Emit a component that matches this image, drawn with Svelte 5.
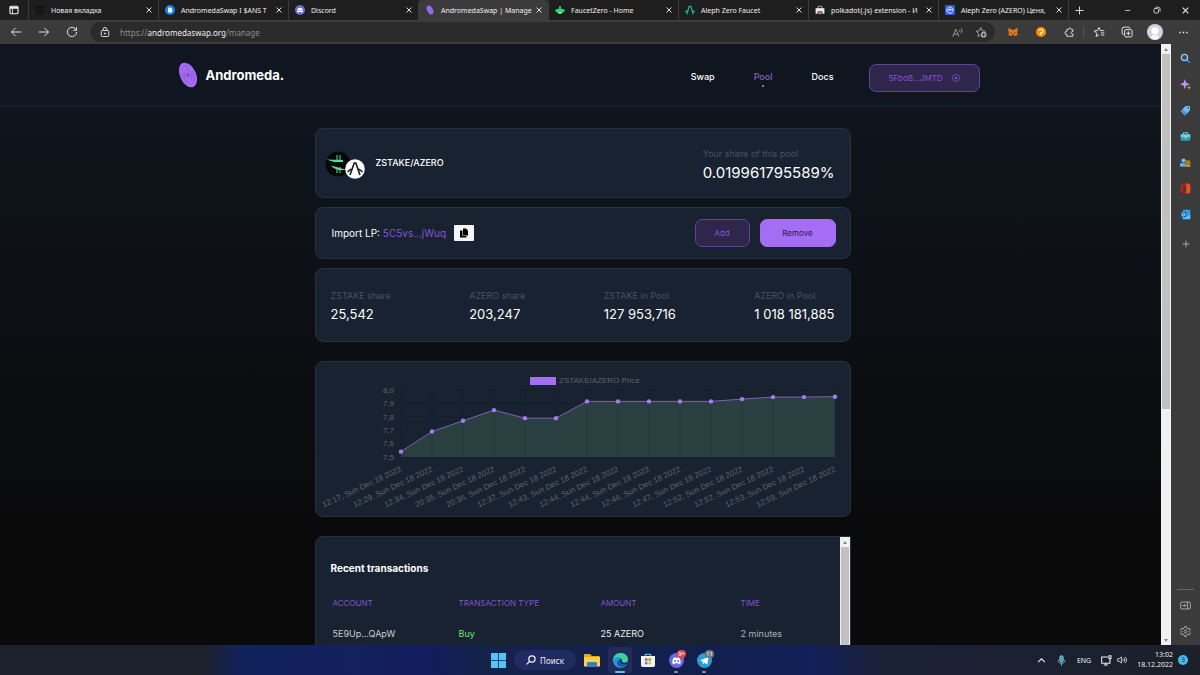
<script>
	let url = 'andromedaswap.org'
	let tabs = [
		{ icon: 'blank', title: 'Новая вкладка' },
		{ icon: 'doc', title: 'AndromedaSwap I $ANS T' },
		{ icon: 'discord', title: 'Discord' },
		{ icon: 'andromeda', title: 'AndromedaSwap | Manage', active: true },
		{ icon: 'faucet', title: 'FaucetZero - Home' },
		{ icon: 'aleph', title: 'Aleph Zero Faucet' },
		{ icon: 'store', title: 'polkadot{.js} extension - И' },
		{ icon: 'cmc', title: 'Aleph Zero (AZERO) Цена,' }
	]
	let sidebar = ['search', 'sparkle', 'tag', 'toolbox', 'games', 'office', 'outlook', 'plus']
	let stats = [
		{ label: 'ZSTAKE share', value: '25,542' },
		{ label: 'AZERO share', value: '203,247' },
		{ label: 'ZSTAKE in Pool', value: '127 953,716' },
		{ label: 'AZERO in Pool', value: '1 018 181,885' }
	]
	let transactions = [
		{ account: '5E9Up...QApW', type: 'Buy', amount: '25 AZERO', time: '2 minutes' }
	]
	let prices = [
		['12:17', 7.54], ['12:29', 7.69], ['12:34', 7.77], ['20:35', 7.85], ['20:36', 7.79],
		['12:37', 7.79], ['12:43', 7.915], ['12:44', 7.915], ['12:44', 7.915], ['12:46', 7.915],
		['12:47', 7.915], ['12:52', 7.932], ['12:52', 7.947], ['12:53', 7.947], ['12:59', 7.95]
	]
	let ticks = ['8,0', '7,9', '7,8', '7,7', '7,6', '7,5']

	// plot area inside the 534x154 chart
	const left = 85
	const top = 28
	const bottom = 95
	const step = 31
	const px = (i) => left + i * step
	const py = (v) => bottom - ((v - 7.5) / 0.5) * (bottom - top)
	let line = prices.map(([, v], i) => px(i) + ',' + py(v)).join(' ')
	let area = px(0) + ',' + bottom + ' ' + line + ' ' + px(prices.length - 1) + ',' + bottom
</script>

{#snippet icon(name, size)}
	<svg width={size} height={size} viewBox="0 0 16 16" fill="none" stroke="currentColor" stroke-width="1.2" aria-hidden="true">
		{#if name === 'blank'}
			<rect x="1" y="1" width="14" height="14" rx="2" fill="#161616" stroke="#1b1b1b" />
		{:else if name === 'doc'}
			<circle cx="8" cy="8" r="8" fill="#1283ea" stroke="none" />
			<path d="M5 4h4l2.500 2v6H5z" fill="#fff" stroke="none" />
		{:else if name === 'discord'}
			<circle cx="8" cy="8" r="8" fill="#6a68de" stroke="none" />
			<path d="M3.500 11c0-3 .6-5 1.500-6l2-.6.4.8h1.200l.4-.8 2 .6c.9 1 1.500 3 1.500 6l-2 1.200-.8-1.200H6.300l-.8 1.200z" fill="#fff" stroke="none" />
			<circle cx="6.300" cy="8.500" r="1" fill="#6a68de" stroke="none" />
			<circle cx="9.700" cy="8.500" r="1" fill="#6a68de" stroke="none" />
		{:else if name === 'andromeda'}
			<ellipse cx="8" cy="8" rx="4.600" ry="7.600" fill="#9a68ee" stroke="none" transform="rotate(-28 8 8)" />
		{:else if name === 'faucet'}
			<path d="M6.500 2h3v4q6 0 6 3t-6 3h-3q-6 0-6-3t6-3z" fill="#2fd66f" stroke="none" />
			<path d="M5 11h6v3H5z" fill="#7af0a4" stroke="none" />
		{:else if name === 'aleph'}
			<path d="M3 15L6.500 2h3L13 15M0 11l4-1.500M16 11l-4-1.500" stroke="#14b896" stroke-width="2" />
		{:else if name === 'store'}
			<path d="M1 5h14v9H1z" fill="#eee" stroke="none" />
			<path d="M5 5V2h6v3" stroke="#ccc" />
			<path d="M3 14a5 5 0 0110 0z" fill="#dd4b3e" stroke="none" />
			<path d="M8 14h5a5 5 0 00-3-4.500z" fill="#36a853" stroke="none" />
			<circle cx="8" cy="13" r="2" fill="#4285f4" stroke="none" />
		{:else if name === 'cmc'}
			<rect width="16" height="16" rx="2" fill="#2c5cf2" stroke="none" />
			<path d="M12.500 10.500a5 5 0 11.500-3c0 2.500-2 2.500-2 0L9.500 6 8 9 6.500 6 5 9" stroke="#fff" stroke-width="1.400" />
		{:else if name === 'close'}
			<path d="M3 3l10 10M13 3L3 13" stroke-width="1.800" />
		{:else if name === 'plus'}
			<path d="M8 1v14M1 8h14" stroke-width="1.600" />
		{:else if name === 'minus'}
			<path d="M2 8h12" stroke-width="1.600" />
		{:else if name === 'restore'}
			<rect x="2" y="5" width="9" height="9" rx="2" stroke-width="1.600" />
			<path d="M5 2.500h6a3 3 0 013 3V11" stroke-width="1.600" />
		{:else if name === 'tabmenu'}
			<rect x="1.500" y="2" width="13" height="12" rx="2" stroke-width="1.800" />
			<path d="M1.500 4.500h13" stroke-width="3" />
			<path d="M5.500 6v8" stroke-width="1.400" />
		{:else if name === 'back'}
			<path d="M15 8H2M7.500 2.500L2 8l5.500 5.500" />
		{:else if name === 'forward'}
			<path d="M1 8h13M8.500 2.500L14 8l-5.500 5.500" />
		{:else if name === 'refresh'}
			<path d="M13.700 5.500A6.200 6.200 0 1014.200 8M14 1.500v4.200H9.800" />
		{:else if name === 'lock'}
			<rect x="3" y="6" width="10" height="8" rx="1.500" />
			<path d="M5.500 6V4.500a2.500 2.500 0 015 0V6" />
			<circle cx="8" cy="10" r=".8" fill="currentColor" />
		{:else if name === 'read'}
			<path d="M1 14L5.500 3 10 14M2.600 10.500h5.800M10.500 4c1 1 1 2.500 0 3.500M13 2c2 2 2 5 0 7" />
		{:else if name === 'favadd'}
			<path d="M7 12.500L4 14l.7-4L1.500 7l4.200-.6L7.700 2l2 4.400L14 7" />
			<circle cx="11.500" cy="11.500" r="3.800" fill="#aaa" stroke="none" />
			<path d="M11.500 9.500v4M9.500 11.500h4" stroke="#2b2b2b" />
		{:else if name === 'fox'}
			<path d="M1 1l5 3.500h4L15 1l.5 5-1 3 1 3.500-3.500 2-2.500-.5h-3L4 14.500.5 12.500l1-3.500-1-3z" fill="#e4761b" stroke="none" />
			<path d="M3.500 8.500l3 1.500-1 1zM12.500 8.500l-3 1.500 1 1z" fill="#3a2418" stroke="none" />
			<path d="M6.500 12.500h3l-.5 2H7z" fill="#3a2418" stroke="none" />
		{:else if name === 'polka'}
			<circle cx="8" cy="8" r="8" fill="#ff8c00" stroke="none" />
			<path d="M5 6.500a3 3 0 113 3.200H6.500M7 9.600v3.200" stroke="#fff" stroke-width="1.800" />
		{:else if name === 'puzzle'}
			<path d="M4 3.500h2.500a2 2 0 014 0H13v3.300a1.800 1.800 0 100 3.200v3.500H4V10.500a2 2 0 110-3.800z" />
		{:else if name === 'favorites'}
			<path d="M8 11.500L4.200 14l1-4.300L1.500 6.600l4.400-.4L8 2l1.700 4.200H15M10.500 9.200H15M10.500 12H15" />
		{:else if name === 'collections'}
			<path d="M3.500 11.500a2 2 0 01-2-2V4a2.500 2.500 0 012.500-2.500h6a2 2 0 012 2" />
			<rect x="4.800" y="4.800" width="10" height="9.800" rx="2" />
			<path d="M9.800 7v5.500M7 9.700h5.600" />
		{:else if name === 'avatar'}
			<circle cx="8" cy="8" r="8" fill="#cfd3e4" stroke="none" />
			<circle cx="8" cy="6.800" r="3.600" fill="#fff" stroke="none" />
			<path d="M4 14.500c0-5.500 8-5.500 8 0-2 1.500-6 1.500-8 0z" fill="#f4f4f8" stroke="none" />
		{:else if name === 'dots'}
			<path d="M2 8h2M7 8h2M12 8h2" stroke-width="2" />
		{:else if name === 'search'}
			<path d="M9.500 9.500l5 5" stroke="#2f83d0" stroke-width="2.600" />
			<circle cx="6.500" cy="6.500" r="4.500" stroke="#9cc4ee" stroke-width="2" fill="#2c4c66" />
		{:else if name === 'sparkle'}
			<path d="M7 0l1.800 5.500L14.500 7.500 8.800 9.500 7 15 5.200 9.500 0 7.500l5.200-2z" fill="#bd96fa" stroke="none" />
			<path d="M13 9.500l.9 2.100L16 12.500l-2.100.9L13 15.500l-.9-2.100-2.100-.9 2.100-.9z" fill="#d8a320" stroke="none" />
		{:else if name === 'tag'}
			<path d="M8 1.500h6.500V8L7 15.200 1 9z" fill="#70b7f2" stroke="none" />
			<path d="M1 9l6 6.200 3-3L4 6z" fill="#4a93d8" stroke="none" />
			<circle cx="12" cy="4" r="1.200" fill="#24516f" stroke="none" />
		{:else if name === 'toolbox'}
			<path d="M5 5V2.500h6V5" stroke="#74c7d8" stroke-width="1.600" />
			<rect x="1" y="4.500" width="14" height="9.500" rx="1" fill="#2b9bb5" stroke="none" />
			<path d="M1 5h14v4H1z" fill="#6fd0dd" stroke="none" />
			<path d="M7 8h2v3H7z" fill="#f2d15c" stroke="none" />
		{:else if name === 'games'}
			<circle cx="5" cy="5" r="3" fill="#76b9ee" stroke="none" />
			<path d="M0 14V9h8v5z" fill="#6aaee6" stroke="none" />
			<circle cx="11.500" cy="8.500" r="4" fill="#a47c20" stroke="none" />
			<path d="M8 12h7v2H8z" fill="#e7bb4a" stroke="none" />
		{:else if name === 'office'}
			<path d="M9 0l6 2v12l-6 2z" fill="#f0501f" stroke="none" />
			<path d="M9 0L1 3.500v9L4.500 11V5L9 4zM1 12.500L9 16v-3z" fill="#c3201d" stroke="none" />
		{:else if name === 'outlook'}
			<rect x="4" y="1" width="11" height="13" rx="1" fill="#2f9ce8" stroke="none" />
			<path d="M4 8l6 3 5-3v7H4z" fill="#59c6f5" stroke="none" />
			<rect x="1" y="4" width="8" height="8" rx="1" fill="#0e64b6" stroke="none" />
			<circle cx="5" cy="8" r="2" stroke="#fff" />
		{:else if name === 'panel'}
			<rect x="1" y="3" width="14" height="10" rx="1.500" />
			<path d="M11 3v10M3.500 8h5M6.500 6l2 2-2 2" />
		{:else if name === 'gear'}
			<path d="M6.500 1h3l.5 2.200 1.600.9 2.100-.7 1.500 2.600L13.600 7.500v1l1.600 1.500-1.500 2.600-2.100-.7-1.600.9-.5 2.200h-3L6 12.800l-1.600-.9-2.100.7L.8 10l1.600-1.500v-1L.8 6l1.500-2.600 2.100.7L6 3.200z" />
			<circle cx="8" cy="8" r="2.200" />
		{:else if name === 'windows'}
			<path d="M0 0h7.600v7.600H0zM8.400 0H16v7.600H8.400zM0 8.400h7.600V16H0zM8.400 8.400H16V16H8.400z" fill="#55c3f5" stroke="none" />
		{:else if name === 'folder'}
			<path d="M0 2h6l2 2h7.500v4H0z" fill="#e5a620" stroke="none" />
			<path d="M0 5h16v9.500H0z" fill="#fbcf55" stroke="none" />
			<path d="M3 14.500v-3.200q0-1.300 1.300-1.300h7.400q1.300 0 1.300 1.300v3.200z" fill="#2b80c8" stroke="none" />
		{:else if name === 'edge'}
			<circle cx="8" cy="8" r="8" fill="#1677c8" stroke="none" />
			<path d="M0 8C0-2.500 16-2.500 16 7c0 4-5.500 4-6.500 2C11 6 7 4 4 5.500 1.500 6.500.5 8 0 8z" fill="#42cfa0" stroke="none" />
			<path d="M0 8c.5-4 7-5 9-1.500C6 6 5 9 7 11.500s5.500 2 7 .8C11 17 1 17 0 8z" fill="#2499dd" stroke="none" />
			<path d="M7 7.500C4.500 10 7 14.500 13.500 12.500 10.500 16 4.500 15 4.500 10.500 4.500 9 5.500 8 7 7.500z" fill="#0c4f9e" stroke="none" />
			<path d="M7 7.500c1-.8 2.500-.6 2.700.3.1.6-.5 1-.2 1.600.9 1.500 4.500 1.200 6-.4-.2 1.200-.8 2.500-1.700 3.200C9.500 13 6 10.500 7 7.500z" fill="#192656" stroke="none" />
		{:else if name === 'msstore'}
			<path d="M5 4V1.500h6V4" stroke="#4bb0ee" stroke-width="1.500" />
			<path d="M0 3.500h16V14q0 2-2 2H2q-2 0-2-2z" fill="#f0f4fa" stroke="none" />
			<path d="M4.500 6h3v3h-3z" fill="#f05133" stroke="none" />
			<path d="M8.500 6h3v3h-3z" fill="#7fba00" stroke="none" />
			<path d="M4.500 10h3v3h-3z" fill="#1b9de2" stroke="none" />
			<path d="M8.500 10h3v3h-3z" fill="#fdb813" stroke="none" />
		{:else if name === 'telegram'}
			<circle cx="8" cy="8" r="8" fill="#269fd8" stroke="none" />
			<path d="M3 8l9.500-4-1.600 8.500-3-2-1.500 1.500L6 9z" fill="#fff" stroke="none" />
		{:else if name === 'chevron'}
			<path d="M2 11l6-6 6 6" stroke-width="1.800" />
		{:else if name === 'mic'}
			<rect x="5.500" y="1" width="5" height="9" rx="2.500" fill="#4b9cb8" stroke="#8fd0e4" />
			<path d="M3 7.500c0 6 10 6 10 0M8 12v3.500" stroke="#8fd0e4" />
		{:else if name === 'network'}
			<path d="M10 3H1v9h12V8.500M4 14.500h6M7 12v2.500" stroke-width="1.500" />
			<path d="M11.500 1h3v4h-3zM13 5v4" stroke-width="1.500" />
		{:else if name === 'volume'}
			<path d="M1 6h2.500L7 3v10l-3.500-3H1zM9 6c1 1 1 3 0 4M11 4.500c2 2 2 5 0 7M13 3c3 3 3 7 0 10" />
		{/if}
	</svg>
{/snippet}

<div class="desktop">
	<div class="tabs">
		<button class="tab-menu" aria-label="Tab actions">{@render icon('tabmenu', 10)}</button>
		{#each tabs as tab}
			<div class="tab" class:active={tab.active}>
				{@render icon(tab.icon, 10)}
				<span>{tab.title}</span>
				<button aria-label="Close tab">{@render icon('close', 8)}</button>
			</div>
		{/each}
		<button class="new-tab" aria-label="New tab">{@render icon('plus', 9)}</button>
		<div class="window-buttons">
			<button aria-label="Minimize">{@render icon('minus', 7)}</button>
			<button aria-label="Restore">{@render icon('restore', 8)}</button>
			<button aria-label="Close">{@render icon('close', 9)}</button>
		</div>
	</div>

	<div class="toolbar">
		<button aria-label="Back">{@render icon('back', 12)}</button>
		<button aria-label="Forward">{@render icon('forward', 12)}</button>
		<button aria-label="Refresh">{@render icon('refresh', 12)}</button>
		<div class="address">
			{@render icon('lock', 12)}
			<span class="url">https://<b>{url}</b>/manage</span>
			<button aria-label="Read aloud">{@render icon('read', 11)}</button>
			<button aria-label="Add to favorites">{@render icon('favadd', 12)}</button>
		</div>
		<button aria-label="MetaMask">{@render icon('fox', 10)}</button>
		<button aria-label="Polkadot">{@render icon('polka', 10)}</button>
		<button aria-label="Extensions">{@render icon('puzzle', 11)}</button>
		<i class="divider"></i>
		<button aria-label="Favorites">{@render icon('favorites', 12)}</button>
		<button aria-label="Collections">{@render icon('collections', 12)}</button>
		<button aria-label="Profile">{@render icon('avatar', 16)}</button>
		<button aria-label="Settings">{@render icon('dots', 11)}</button>
	</div>

	<div class="window">
		<div class="page">
			<header>
				<div class="header-inner">
					<a class="logo" href="/">
						<svg width="20" height="26" viewBox="0 0 20 26" aria-hidden="true">
							<g transform="rotate(-24 10 13)" fill="none" stroke="#7c4fc9">
								<ellipse cx="10" cy="13" rx="8" ry="13" fill="#a56cf4" stroke="none" />
								<ellipse cx="10" cy="13" rx="5.500" ry="9.500" stroke-dasharray="12 3" stroke-width=".6" />
								<ellipse cx="10" cy="13" rx="3.500" ry="6" stroke-dasharray="8 3" stroke-width=".6" />
								<ellipse cx="10" cy="13" rx="1" ry="1.800" fill="#7c4fc9" />
							</g>
						</svg>
						Andromeda.
					</a>
					<nav>
						<a href="/swap">Swap</a>
						<a href="/pool" class="current">Pool</a>
						<a href="/docs">Docs</a>
					</nav>
					<button class="outline account">
						5FboB...JMTD
						<svg width="8" height="8" viewBox="0 0 16 16" fill="none" stroke="currentColor" stroke-width="1.500" aria-hidden="true">
							<circle cx="8" cy="8" r="7" />
							<path d="M5.500 5.500l5 5M10.500 5.500l-5 5" stroke-width="2" />
						</svg>
					</button>
				</div>
			</header>

			<main>
				<section class="card pair">
					<svg width="40" height="28" viewBox="0 0 40 28" aria-hidden="true">
						<circle cx="13" cy="13" r="12.500" fill="#050708" />
						<path d="M1.500 8.500L18 9v2H9zM22 19L6 14.500l2.500 2.500 5 2z" fill="#4fe39a" />
						<path d="M12 4v6M15 4v6M12 16v6M15 16v6" stroke="#4fe39a" stroke-width="1" />
						<circle cx="30" cy="18" r="9.800" fill="#fff" />
						<path d="M25 24l4.200-12h1.600L35 24M22.500 21l3.500-3M37.500 21L34 18" fill="none" stroke="#14171c" stroke-width="1.600" />
					</svg>
					<h1>ZSTAKE/AZERO</h1>
					<div class="share">
						<span class="label">Your share of this pool</span>
						<span class="big">0.019961795589%</span>
					</div>
				</section>

				<section class="card lp">
					<p>Import LP: <a href="/lp">5C5vs...jWuq</a></p>
					<button class="copy" aria-label="Copy address">
						<svg width="10" height="10" viewBox="0 0 20 20" aria-hidden="true">
							<path d="M8 1h6l4 4v10H8z" fill="#000" />
							<path d="M2 5h5v11h8v3H2z" fill="#000" />
						</svg>
					</button>
					<button class="outline add">Add</button>
					<button class="remove">Remove</button>
				</section>

				<section class="card stats">
					{#each stats as stat}
						<div>
							<span class="label">{stat.label}</span>
							<span class="value">{stat.value}</span>
						</div>
					{/each}
				</section>

				<section class="card chart">
					<svg viewBox="0 0 534 154" role="img" aria-label="ZSTAKE/AZERO Price">
						<rect x="214" y="15" width="26" height="8" fill="#a56ff2" />
						<text x="243" y="21">ZSTAKE/AZERO Price</text>
						{#each ticks as tick, i}
							<text x="78" y={31 + i * 13.3} text-anchor="end">{tick}</text>
							<path class="grid" d="M{left} {top + i * 13.4}H{px(14)}" />
						{/each}
						<polygon points={area} fill="#2a4040" />
						{#each prices as [time], i}
							<path class="grid" d="M{px(i)} {top}V{bottom}" />
							<text text-anchor="end" transform="translate({px(i) + 1} 109) rotate(-25)">{time}, Sun Dec 18 2022</text>
						{/each}
						<polyline points={line} fill="none" stroke="#7c62b8" />
						{#each prices as [, value], i}
							<circle cx={px(i)} cy={py(value)} r="2.200" fill="#a37af0" />
						{/each}
					</svg>
				</section>

				<section class="card recent">
					<div class="recent-body">
						<h2>Recent transactions</h2>
						<table>
							<thead>
								<tr><th>ACCOUNT</th><th>TRANSACTION TYPE</th><th>AMOUNT</th><th>TIME</th></tr>
							</thead>
							<tbody>
								{#each transactions as tx}
									<tr>
										<td>{tx.account}</td>
										<td class="buy">{tx.type}</td>
										<td class="amount">{tx.amount}</td>
										<td class="time">{tx.time}</td>
									</tr>
								{/each}
							</tbody>
						</table>
					</div>
					<div class="scrollbar"><i class="up"></i><i class="thumb full"></i></div>
				</section>
			</main>
		</div>
		<div class="scrollbar"><i class="up"></i><i class="thumb"></i><i class="down"></i></div>
		<aside>
			{#each sidebar as name}
				<button class={name} aria-label={name}>{@render icon(name, name === 'plus' ? 8 : 11)}</button>
			{/each}
			<hr />
			<button aria-label="Hide sidebar">{@render icon('panel', 11)}</button>
			<button aria-label="Sidebar settings">{@render icon('gear', 11)}</button>
		</aside>
	</div>

	<footer>
		<div class="apps">
			<button aria-label="Start">{@render icon('windows', 15)}</button>
			<button class="find">
				<svg width="10" height="10" viewBox="0 0 16 16" fill="none" stroke="currentColor" stroke-width="2" aria-hidden="true">
					<circle cx="9.500" cy="6.500" r="5" />
					<path d="M6 10l-5 5" />
				</svg>
				Поиск
			</button>
			<button aria-label="Explorer">{@render icon('folder', 16)}</button>
			<button aria-label="Edge" class="focused">{@render icon('edge', 15)}</button>
			<button aria-label="Microsoft Store">{@render icon('msstore', 14)}</button>
			<button aria-label="Discord" class="open">{@render icon('discord', 15)}<em>9+</em></button>
			<button aria-label="Telegram" class="open">{@render icon('telegram', 15)}<em class="muted">11</em></button>
		</div>
		<div class="tray">
			{@render icon('chevron', 9)}
			{@render icon('mic', 11)}
			<span>ENG</span>
			<div class="status">
				{@render icon('network', 11)}
				{@render icon('volume', 10)}
			</div>
			<time>13:02<br />18.12.2022</time>
			<span class="count">3</span>
		</div>
	</footer>
</div>

<style>
	:global(body) {
		margin: 0;
		background: #0a0a0b;
	}
	* {
		box-sizing: border-box;
	}
	svg {
		display: block;
		flex: none;
	}
	button {
		display: flex;
		align-items: center;
		justify-content: center;
		padding: 0;
		border: 0;
		background: none;
		color: inherit;
		font: inherit;
	}
	a {
		color: inherit;
		text-decoration: none;
	}
	.desktop {
		display: flex;
		flex-direction: column;
		height: 100vh;
		overflow: hidden;
		color: #f0f0f0;
		font: 7px "Noto Sans", sans-serif;
	}

	/* browser */
	.tabs {
		display: flex;
		flex: none;
		height: 20px;
		background: #1e1e1e;
	}
	.tab-menu {
		width: 28px;
	}
	.tab {
		display: flex;
		align-items: center;
		flex: 0 1 130px;
		min-width: 0;
		padding: 0 5px 0 6px;
		border-left: 1px solid #3b3b3b;
	}
	.tab.active {
		border-radius: 4px 4px 0 0;
		background: #3b3b3b;
	}
	.tab span {
		flex: 1;
		padding-left: 6px;
		white-space: nowrap;
	}
	.tab button {
		width: 8px;
	}
	.new-tab {
		width: 22px;
		border-left: 1px solid #3b3b3b;
	}
	.window-buttons {
		display: flex;
		margin-left: auto;
	}
	.window-buttons button {
		width: 29px;
	}
	.toolbar {
		display: flex;
		align-items: center;
		flex: none;
		height: 24px;
		padding: 0 3px 0 2px;
		background: #3b3b3b;
	}
	.toolbar button {
		width: 28px;
		height: 20px;
	}
	.address {
		display: flex;
		align-items: center;
		flex: 1;
		height: 20px;
		margin: 0 4px;
		padding: 0 3px 0 9px;
		border-radius: 10px;
		background: #2b2b2b;
	}
	.address button {
		width: 23px;
		color: #aaa;
	}
	.url {
		flex: 1;
		padding-left: 9px;
		color: #8e8e8e;
		font-size: 8px;
	}
	.url b {
		color: #eee;
		font-weight: 400;
	}
	.divider {
		width: 1px;
		height: 12px;
		margin-right: 1px;
		background: #555;
	}
	.window {
		display: flex;
		flex: 1;
		min-height: 0;
	}
	.scrollbar {
		display: flex;
		flex-direction: column;
		flex: none;
		width: 10px;
		background: #f1f1f1;
	}
	.up,
	.down {
		display: flex;
		align-items: center;
		justify-content: center;
		height: 10px;
	}
	.up::before,
	.down::before {
		content: "";
		border: 2px solid transparent;
		border-top: 0;
		border-bottom: 3px solid #888;
	}
	.down::before {
		transform: rotate(180deg);
	}
	.thumb {
		height: 59%;
		margin: 0 1px auto;
		background: #c1c1c1;
	}
	.thumb.full {
		flex: 1;
		margin-bottom: 0;
	}
	aside {
		display: flex;
		flex-direction: column;
		flex: none;
		width: 29px;
		padding: 1px 0;
		background: #3b3b3b;
		color: #bbb;
	}
	aside button {
		height: 26px;
		width: 100%;
	}
	aside .plus {
		margin-top: 4px;
	}
	hr {
		width: 17px;
		margin: auto auto 2px;
		border: 0;
		border-top: 1px solid #666;
	}

	/* site */
	.page {
		flex: 1;
		min-width: 0;
		overflow: hidden;
		background: linear-gradient(#101620, #0a0a0b 80%);
		color: #fff;
		font: 9px Inter, sans-serif;
	}
	header {
		padding-right: 4px;
		border-bottom: 1px solid #1b2530;
		background: #101620;
	}
	.header-inner {
		display: flex;
		align-items: center;
		max-width: 802px;
		height: 62px;
		margin: 0 auto;
		padding-top: 6px;
	}
	.logo {
		display: flex;
		align-items: center;
		flex: 1;
		gap: 8px;
		padding-bottom: 7px;
		font-size: 13px;
		font-weight: 700;
	}
	nav {
		display: flex;
		gap: 39px;
		margin-right: 35px;
		padding-bottom: 4px;
		font-weight: 500;
	}
	.current {
		position: relative;
		color: #8b5cd6;
	}
	.current::after {
		content: "";
		position: absolute;
		bottom: -5px;
		left: calc(50% - 1px);
		width: 2px;
		height: 2px;
		border-radius: 50%;
		background: #b48cf5;
	}
	.outline,
	.remove {
		height: 28px;
		border: 1px solid #5d4693;
		border-radius: 7px;
		background: #2f264b;
		color: #8352cf;
		font-size: 8px;
	}
	.account {
		gap: 9px;
		width: 111px;
	}
	main {
		display: flex;
		flex-direction: column;
		gap: 9px;
		max-width: 540px;
		margin: 0 auto;
		padding: 21px 0 0 4px;
	}
	.card {
		display: flex;
		align-items: center;
		border: 1px solid #26333c;
		border-radius: 8px;
		background: #182230;
	}
	.pair {
		padding: 18px 15px 12px 9px;
	}
	.pair svg {
		margin-bottom: 3px;
	}
	h1 {
		flex: 1;
		margin: 0 0 8px 11px;
		font-size: 9px;
		font-weight: 500;
	}
	.share,
	.stats div {
		display: flex;
		flex-direction: column;
	}
	.label {
		color: #475268;
		font-size: 9px;
		line-height: 14px;
	}
	.big {
		font-size: 15px;
		line-height: 24px;
	}
	.lp {
		padding: 11px 14px 11px 16px;
	}
	.lp p {
		margin: 0 8px 0 0;
		font-size: 10px;
	}
	.lp a {
		color: #8756d8;
	}
	.copy {
		width: 20px;
		height: 16px;
		border-radius: 1px;
		background: #f5f5f5;
	}
	.add {
		width: 55px;
		margin: 0 10px 0 auto;
	}
	.remove {
		width: 76px;
		border-color: #a56df4;
		background: #a56df4;
		color: #2c1650;
	}
	.stats {
		justify-content: space-between;
		padding: 20px 15px 16px;
	}
	.value {
		font-size: 13px;
		line-height: 22px;
	}
	.chart {
		margin-top: 10px;
	}
	.chart svg {
		width: 100%;
	}
	.chart text {
		fill: #606468;
		font: 8px "Liberation Sans", sans-serif;
	}
	.grid {
		stroke: #000;
		stroke-opacity: 0.08;
	}
	.recent {
		align-items: stretch;
		height: 200px;
		margin-top: 10px;
		border-top-right-radius: 0;
	}
	.recent-body {
		flex: 1;
		padding: 24px 15px 0;
	}
	h2 {
		margin: 0 0 21px;
		font-size: 10px;
		font-weight: 700;
		line-height: 14px;
	}
	table {
		width: 100%;
		border-collapse: collapse;
		table-layout: fixed;
	}
	th,
	td {
		height: 30px;
		padding: 12px 2px 0;
		text-align: left;
	}
	th {
		height: 16px;
		padding: 0 2px 2px;
		color: #8352cf;
		font-size: 8px;
		font-weight: 400;
	}
	th:nth-child(1) {
		width: 126px;
	}
	th:nth-child(2) {
		width: 142px;
	}
	th:nth-child(3) {
		width: 140px;
	}
	td {
		color: #ccc;
	}
	.buy {
		color: #6ee07c;
	}
	.amount {
		color: #eee;
	}
	.time {
		color: #aab0b8;
	}

	/* taskbar */
	footer {
		display: grid;
		grid-template-columns: 1fr auto 1fr;
		flex: none;
		height: 30px;
		background: linear-gradient(to right, #1c212b 17%, #11225a 20%, #13215f 30%, #141b5c 36%, #14234a 40%, #121f4e 60%, #13205a 68%, #1b2138 73%, #1b2029);
	}
	.apps {
		display: flex;
		align-items: center;
		grid-column: 2;
		gap: 4px;
		padding-left: 2px;
	}
	.apps button {
		position: relative;
		width: 24px;
		height: 26px;
	}
	.apps .find {
		gap: 4px;
		width: 62px;
		height: 20px;
		border-radius: 10px;
		background: #222b61;
		font-size: 8px;
	}
	.apps .focused {
		border-radius: 3px;
		background: #222c5a;
	}
	.focused::after,
	.open::after {
		content: "";
		position: absolute;
		bottom: 0;
		width: 10px;
		height: 2px;
		border-radius: 1px;
		background: #5ec1f0;
	}
	.open::after {
		width: 4px;
		background: #8e94a8;
	}
	em {
		position: absolute;
		top: 3px;
		right: 2px;
		padding: 0 1px;
		border-radius: 4px;
		background: #e0474c;
		color: #fff;
		font-size: 6px;
		font-style: normal;
		line-height: 8px;
	}
	em.muted {
		background: #707680;
	}
	.tray {
		display: flex;
		align-items: center;
		justify-content: flex-end;
		gap: 10px;
		padding-right: 12px;
	}
	.status {
		display: flex;
		align-items: center;
		gap: 5px;
	}
	time {
		line-height: 10px;
		text-align: right;
	}
	.count {
		width: 10px;
		margin-left: -5px;
		border-radius: 5px;
		background: #4cb8f0;
		color: #10304a;
		line-height: 10px;
		text-align: center;
	}
</style>
